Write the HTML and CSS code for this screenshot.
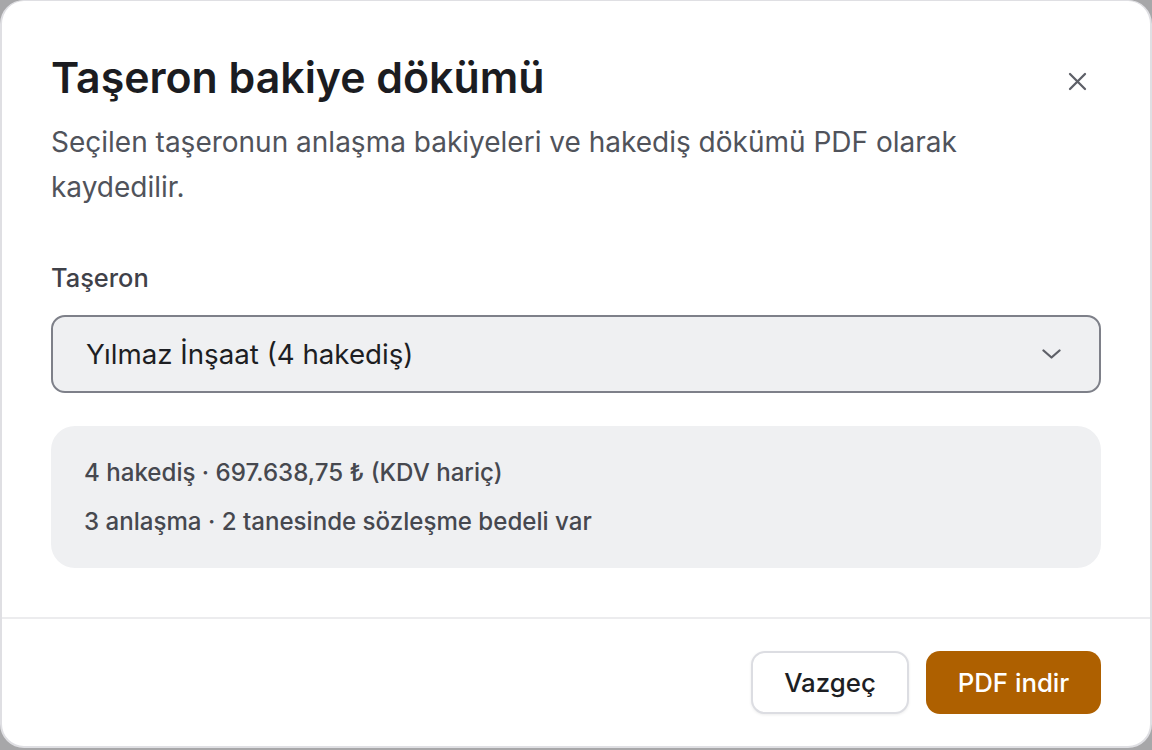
FILE: index.html
```html
<!DOCTYPE html>
<html lang="tr">
<head>
  <meta charset="UTF-8" />
  <meta name="viewport" content="width=device-width, initial-scale=1.0"/>
  <title>Taşeron bakiye dökümü</title>
  <link rel="stylesheet" href="styles.css">
</head>
<body>
  <div class="modal">
    <div class="modal-body">
      <div class="modal-header">
        <h2 class="modal-title">Taşeron bakiye dökümü</h2>
        <button class="close-btn" aria-label="Kapat">
          <svg width="19" height="19" viewBox="0 0 19 19" fill="none" stroke="#5e6068" stroke-width="2.3" stroke-linecap="round">
            <path d="M2 2L17 17M17 2L2 17"/>
          </svg>
        </button>
      </div>
      <p class="modal-desc">Seçilen taşeronun anlaşma bakiyeleri ve hakediş dökümü PDF olarak kaydedilir.</p>

      <label class="field-label">Taşeron</label>
      <div class="select-box">
        <span>Yılmaz İnşaat (4 hakediş)</span>
        <svg width="19" height="10" viewBox="0 0 19 10" fill="none" stroke="#5e6068" stroke-width="2.3" stroke-linecap="round" stroke-linejoin="round">
          <path d="M1.5 1.5L9.5 8.5L17.5 1.5"/>
        </svg>
      </div>

      <div class="info-box">
        <p>4 hakediş · 697.638,75 ₺ (KDV hariç)</p>
        <p>3 anlaşma · 2 tanesinde sözleşme bedeli var</p>
      </div>
    </div>

    <div class="modal-footer">
      <button class="btn btn-cancel">Vazgeç</button>
      <button class="btn btn-primary">PDF indir</button>
    </div>
  </div>
</body>
</html>
```
FILE: styles.css
```css
* {
  box-sizing: border-box;
}
body {
  margin: 0;
  padding: 0;
  background-color: #a7a7a9;
  font-family: Inter, "Noto Sans", sans-serif;
  overflow: hidden;
}
.modal {
  width: 1152px;
  height: 748px;
  background: #fff;
  border: 2px solid #dfdfe3;
  border-top-width: 1px;
  border-radius: 24px;
  display: flex;
  flex-direction: column;
}
.modal-body {
  padding: 49px 49px 49px 49px;
  border-bottom: 2px solid #ececee;
}
.modal-header {
  display: flex;
  align-items: flex-start;
  justify-content: space-between;
}
.modal-title {
  margin: 0;
  font-size: 42.8px;
  line-height: 56px;
  font-weight: 600;
  color: #1b1c21;
}
.close-btn {
  background: none;
  border: none;
  padding: 0;
  margin: 22px 14px 0 0;
  width: 19px;
  height: 19px;
  display: flex;
  cursor: pointer;
}
.modal-desc {
  margin: 13.5px 0 0;
  padding-right: 30px;
  font-size: 28px;
  line-height: 45px;
  color: #50535b;
}
.field-label {
  display: block;
  margin-top: 49.5px;
  font-size: 25.4px;
  line-height: 38px;
  font-weight: 500;
  color: #3f4149;
}
.select-box {
  margin-top: 17.5px;
  height: 78px;
  border: 2px solid #7e8089;
  border-radius: 14px;
  background: #eff0f2;
  padding: 0 38px 0 33px;
  display: flex;
  align-items: center;
  justify-content: space-between;
  font-size: 27.7px;
  color: #1d1e23;
}
.info-box {
  margin-top: 33px;
  background: #eff0f2;
  border-radius: 24px;
  padding: 31.7px 33px 31.3px;
  font-size: 24.1px;
  line-height: 31px;
  font-weight: 500;
  color: #46484f;
}
.info-box p {
  margin: 0;
}
.info-box p + p {
  margin-top: 18px;
}
.modal-footer {
  flex: 1;
  display: flex;
  align-items: center;
  justify-content: flex-end;
  gap: 17px;
  padding: 0 49px;
}
.btn {
  height: 63px;
  border-radius: 14px;
  font-family: inherit;
  font-size: 25.8px;
  font-weight: 500;
  cursor: pointer;
}
.btn-cancel {
  width: 158px;
  background: #fff;
  color: #1d1e23;
  border: 2px solid #dcdde2;
  box-shadow: 0 1px 3px rgba(0,0,0,0.08);
}
.btn-primary {
  width: 175px;
  background: #ae6000;
  color: #fff;
  border: none;
}
```
